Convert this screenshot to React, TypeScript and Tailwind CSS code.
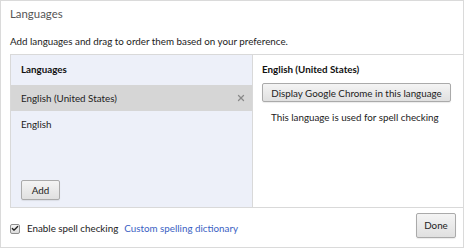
import { X, Check } from 'lucide-react';

const font = { fontFamily: 'Lato, "Noto Sans", sans-serif' };

function Btn({ children, className = '' }: { children: React.ReactNode; className?: string }) {
  return (
    <button
      className={`rounded-[2px] border border-[#aaaaaa] bg-gradient-to-b from-[#f4f4f4] to-[#e0e0e0] text-[9.8px] text-[#222] shadow-[0_1px_1px_rgba(0,0,0,0.08)] ${className}`}
    >
      {children}
    </button>
  );
}

export default function App() {
  return (
    <div className="w-[465px] h-[249px] bg-white" style={font}>
      <div className="h-[248px] w-[464px] border border-[#dadada] flex flex-col text-[#222]">
        <h1 className="pl-[9px] pt-[5px] h-[27px] text-[11.4px] text-[#555] leading-[16px]">Languages</h1>
        <p className="pl-[9px] pt-[5px] text-[9.8px] leading-[16px] h-[26px]">
          Add languages and drag to order them based on your preference.
        </p>
        <div className="ml-[9px] flex h-[154px] border-t border-b border-l border-[#d9d9d9]">
          <div className="w-[242px] bg-[#edf0f9] border-r border-[#d9d9d9] flex flex-col">
            <div className="h-[30px] pl-[10px] pb-[1px] flex items-center font-bold text-[9.8px] text-[#111]">Languages</div>
            <div className="h-[26px] pl-[10px] pr-[6px] flex items-center justify-between bg-[#d6d6d6] text-[9.8px]">
              <span>English (United States)</span>
              <X className="w-[10px] h-[10px] text-[#8a8a8a]" strokeWidth={3} />
            </div>
            <div className="h-[26px] pl-[10px] flex items-center text-[9.8px]">English</div>
            <div className="flex-1" />
            <div className="pl-[10px] pb-[7px]">
              <Btn className="w-[39px] h-[20px]">Add</Btn>
            </div>
          </div>
          <div className="flex-1 flex flex-col pl-[9px] pt-[6px]">
            <div className="font-bold text-[9.8px] text-[#111] leading-[16px]">English (United States)</div>
            <Btn className="mt-[6px] w-[189px] h-[19px] leading-[16px]">Display Google Chrome in this language</Btn>
            <div className="pl-[9px] mt-[7px] text-[9.8px] leading-[16px]">This language is used for spell checking</div>
          </div>
        </div>
        <div className="flex items-center justify-between pl-[9px] pr-[7px] flex-1">
          <div className="flex items-center text-[9.8px] mt-[2px]">
            <span className="w-[10px] h-[10px] border border-[#8e8e8e] rounded-[2px] bg-gradient-to-b from-[#f6f6f6] to-[#dcdcdc] flex items-center justify-center">
              <Check className="w-[9px] h-[9px] text-[#222]" strokeWidth={4} />
            </span>
            <span className="ml-[7px]">Enable spell checking</span>
            <span className="ml-[6px] text-[#3a5fc3]">Custom spelling dictionary</span>
          </div>
          <Btn className="w-[40px] h-[25px] mb-[4px]">Done</Btn>
        </div>
      </div>
    </div>
  );
}
